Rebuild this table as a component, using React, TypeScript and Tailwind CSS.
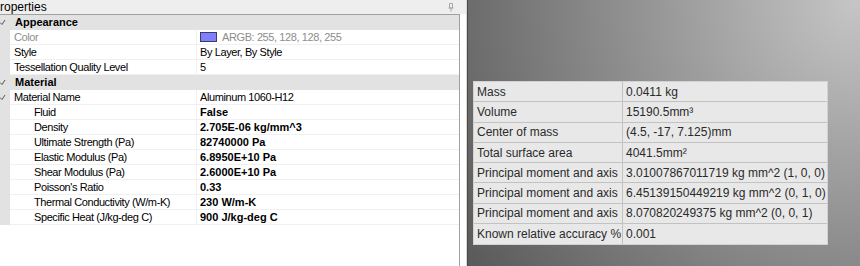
type Prop = {
  name: string
  value?: string
  cat?: boolean
  sub?: boolean
  bold?: boolean
  muted?: boolean
  swatch?: boolean
  open?: boolean
}

const props: Prop[] = [
  { name: "Appearance", cat: true },
  { name: "Color", value: "ARGB: 255, 128, 128, 255", muted: true, swatch: true },
  { name: "Style", value: "By Layer, By Style" },
  { name: "Tessellation Quality Level", value: "5" },
  { name: "Material", cat: true },
  { name: "Material Name", value: "Aluminum 1060-H12", open: true },
  { name: "Fluid", value: "False", sub: true, bold: true },
  { name: "Density", value: "2.705E-06 kg/mm^3", sub: true, bold: true },
  { name: "Ultimate Strength (Pa)", value: "82740000 Pa", sub: true, bold: true },
  { name: "Elastic Modulus (Pa)", value: "6.8950E+10 Pa", sub: true, bold: true },
  { name: "Shear Modulus (Pa)", value: "2.6000E+10 Pa", sub: true, bold: true },
  { name: "Poisson's Ratio", value: "0.33", sub: true, bold: true },
  { name: "Thermal Conductivity (W/m-K)", value: "230 W/m-K", sub: true, bold: true },
  { name: "Specific Heat (J/kg-deg C)", value: "900 J/kg-deg C", sub: true, bold: true },
]

const mass = [
  ["Mass", "0.0411 kg"],
  ["Volume", "15190.5mm³"],
  ["Center of mass", "(4.5, -17, 7.125)mm"],
  ["Total surface area", "4041.5mm²"],
  ["Principal moment and axis", "3.01007867011719 kg mm^2 (1, 0, 0)"],
  ["Principal moment and axis", "6.45139150449219 kg mm^2 (0, 1, 0)"],
  ["Principal moment and axis", "8.070820249375 kg mm^2 (0, 0, 1)"],
  ["Known relative accuracy %", "0.001"],
]

function Tick() {
  return (
    <svg width="7" height="7" viewBox="0 0 7 7" className="ml-[-1px]">
      <path d="M1 3.5 L3 5.5 L6 1" fill="none" stroke="#555" strokeWidth="1" />
    </svg>
  )
}

function PropRow({ p }: { p: Prop }) {
  if (p.cat) {
    return (
      <div className="flex h-[15px] items-center bg-[#e2e2e2] border-b border-[#e2e2e2]">
        <div className="w-[10px] flex items-center"><Tick /></div>
        <span className="pl-[5px] text-[11px] font-bold text-black">{p.name}</span>
      </div>
    )
  }
  return (
    <div className="flex h-[15px]">
      <div className="w-[10px] bg-[#e2e2e2] flex items-center">{p.open && <Tick />}</div>
      <div className="flex flex-1 border-b border-[#f0f0f0]">
        <div
          className={`w-[187px] flex items-center border-r border-[#f0f0f0] text-[11px] tracking-[-0.4px] ${
            p.sub ? "pl-[24px]" : "pl-[4px]"
          } ${p.muted ? "text-[#8d8d8d]" : "text-black"}`}
        >
          {p.name}
        </div>
        <div
          className={`flex-1 flex items-center gap-[5px] pl-[3px] text-[11px] ${
            p.bold ? "font-bold text-black" : "tracking-[-0.4px]"
          } ${p.muted ? "text-[#8d8d8d]" : "text-black"}`}
        >
          {p.swatch && <span className="w-[17px] h-[10px] bg-[#8080ff] border border-[#3c3c6c]" />}
          {p.value}
        </div>
      </div>
    </div>
  )
}

export default function App() {
  return (
    <div className="flex w-[860px] h-[266px] overflow-hidden font-['Liberation_Sans',Arial,sans-serif]">
      <div className="w-[466px] flex flex-col bg-white">
        <div className="h-[14px] bg-[#eeeeee] flex items-center justify-between">
          <span className="text-[12px] leading-none text-black">roperties</span>
          <svg width="6" height="9" viewBox="0 0 6 9" className="mr-[12px]">
            <path d="M1.5 0.5 H4.5 V5 H1.5 Z M0.5 5 H5.5 M3 5 V8.5" fill="none" stroke="#a8a8a8" strokeWidth="1" />
          </svg>
        </div>
        <div className="flex-1 flex pr-[6px]">
          <div className="w-[460px] border-t border-r border-[#a0a0a0]">
            {props.map((p, i) => (
              <PropRow key={i} p={p} />
            ))}
          </div>
        </div>
      </div>
      <div className="w-px bg-[#dcd8cc]" />
      <div className="w-px bg-[#4a4a4a]" />
      <div className="flex-1 pt-[81px] pl-[5px] bg-[radial-gradient(circle_at_100%_0%,#c6c6c6_0px,#595959_474px)]">
        <div className="w-[355px] border border-[#d2d2d2] bg-[#e8e8e8]">
          {mass.map(([k, v], i) => (
            <div
              key={i}
              className={`grid grid-cols-[149px_1fr] h-[20.3px] text-[12px] text-[#2a2a2a] ${
                i < mass.length - 1 ? "border-b border-[#c2c2c2]" : ""
              }`}
            >
              <div className="pl-[3px] flex items-center border-r border-[#c2c2c2]">{k}</div>
              <div className="pl-[3px] flex items-center">{v}</div>
            </div>
          ))}
        </div>
      </div>
    </div>
  )
}
